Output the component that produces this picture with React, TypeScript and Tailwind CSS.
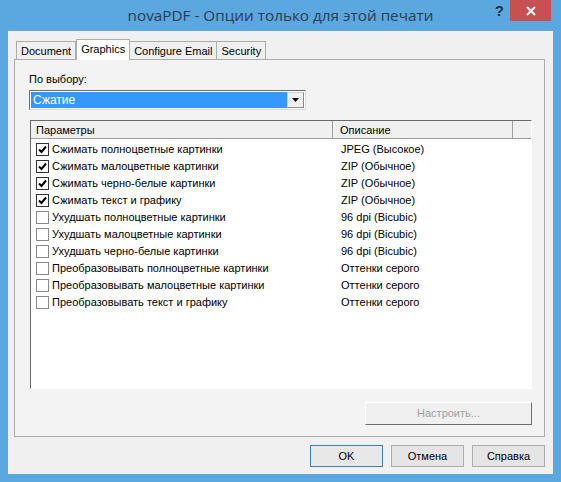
const rows = [
  { label: "Сжимать полноцветные картинки", desc: "JPEG (Высокое)", on: true },
  { label: "Сжимать малоцветные картинки", desc: "ZIP (Обычное)", on: true },
  { label: "Сжимать черно-белые картинки", desc: "ZIP (Обычное)", on: true },
  { label: "Сжимать текст и графику", desc: "ZIP (Обычное)", on: true },
  { label: "Ухудшать полноцветные картинки", desc: "96 dpi (Bicubic)", on: false },
  { label: "Ухудшать малоцветные картинки", desc: "96 dpi (Bicubic)", on: false },
  { label: "Ухудшать черно-белые картинки", desc: "96 dpi (Bicubic)", on: false },
  { label: "Преобразовывать полноцветные картинки", desc: "Оттенки серого", on: false },
  { label: "Преобразовывать малоцветные картинки", desc: "Оттенки серого", on: false },
  { label: "Преобразовывать текст и графику", desc: "Оттенки серого", on: false },
];

const tabs = ["Document", "Graphics", "Configure Email", "Security"];

export default function App() {
  return (
    <div
      className="flex h-[482px] w-[561px] flex-col bg-[#5ba7df] text-[11px] text-black"
      style={{ fontFamily: '"Liberation Sans", Arial, sans-serif' }}
    >
      {/* title bar */}
      <div className="grid h-[31px] grid-cols-[1fr_auto_1fr] items-start">
        <div />
        <div
          className="pt-[4px] text-[15.3px] leading-[22px] text-[#2a3d4f]"
          style={{ fontFamily: '"Open Sans", "Noto Sans", sans-serif' }}
        >
          novaPDF - Опции только для этой печати
        </div>
        <div className="flex items-start justify-end pr-[10px]">
          <span className="mr-[6px] mt-[3px] text-[15px] font-bold leading-[16px] text-[#1e3346]">?</span>
          <button
            type="button"
            className="grid h-[21px] w-[41px] place-items-center bg-[#c75050] text-white"
          >
            <svg width="10" height="10" viewBox="0 0 10 10">
              <path d="M1 1L9 9M9 1L1 9" stroke="white" strokeWidth="2" />
            </svg>
          </button>
        </div>
      </div>

      {/* client */}
      <div className="mx-[8px] mb-[8px] flex flex-1 flex-col bg-[#f0f0f0] pl-[6px] pr-[8px] pt-[9px]">
        <div className="flex h-[19px] items-end pl-[2px]">
          {tabs.map((t) => {
            const sel = t === "Graphics";
            return (
              <div
                key={t}
                className={
                  sel
                    ? "relative z-10 -mb-px flex h-[21px] items-start border border-b-0 border-[#adadad] bg-white px-[4px] pt-[2px] leading-[15px]"
                    : "-ml-px flex h-[18px] items-start border border-b-0 border-[#adadad] bg-[#f0f0f0] px-[4px] pt-[2px] leading-[15px] first:ml-0"
                }
              >
                {t}
              </div>
            );
          })}
        </div>

        {/* tab page */}
        <div className="flex h-[378px] flex-col border border-[#adadad] bg-[#f3f3f3] pl-[14px] pr-[12px] pt-[12px]">
          <div className="leading-[15px]">По выбору:</div>
          <div className="mt-[3px] flex h-[20px] w-[277px] border border-t-[#6d6d6d] border-l-[#6d6d6d] border-r-[#dcdcdc] border-b-[#dcdcdc] bg-white p-px">
            <div className="flex flex-1 items-center bg-[#3399ff] px-[2px] text-[12px] text-white">Сжатие</div>
            <div className="grid w-[17px] place-items-center border border-[#d0d0d0] border-b-[#8c8c8c] border-r-[#8c8c8c] bg-[#f0f0f0]">
              <svg width="7" height="4" viewBox="0 0 7 4">
                <path d="M0 0H7L3.5 4Z" fill="black" />
              </svg>
            </div>
          </div>

          {/* list */}
          <div className="ml-px mt-[10px] flex h-[269px] flex-col border border-t-[#696969] border-l-[#696969] border-r-[#ffffff] border-b-[#ffffff] bg-white">
            <div className="flex h-[18px] border-b border-[#a0a0a0] bg-[#f0f0f0] leading-[16px]">
              <div className="w-[302px] border-r border-[#a0a0a0] pl-[5px] pt-px">Параметры</div>
              <div className="w-[180px] border-r border-[#a0a0a0] pl-[7px] pt-px">Описание</div>
              <div className="flex-1" />
            </div>
            <div className="pt-[2px]">
              {rows.map((r) => (
                <div key={r.label} className="flex h-[17px] items-center">
                  <div className="flex w-[302px] items-center pl-[5px]">
                    <span
                      className={
                        "grid h-[13px] w-[13px] place-items-center border bg-white " +
                        (r.on ? "border-[#333333]" : "border-[#8a8a8a]")
                      }
                    >
                      {r.on && (
                        <svg width="9" height="9" viewBox="0 0 9 9">
                          <path d="M1 4.5L3.5 7L8 1.5" stroke="black" strokeWidth="2" fill="none" />
                        </svg>
                      )}
                    </span>
                    <span className="ml-[3px] whitespace-nowrap">{r.label}</span>
                  </div>
                  <div className="pl-[8px] whitespace-nowrap">{r.desc}</div>
                </div>
              ))}
            </div>
          </div>

          <div className="mt-[13px] flex justify-end">
            <button
              type="button"
              disabled
              className="h-[23px] w-[167px] border border-t-white border-l-white border-r-[#6d6d6d] border-b-[#6d6d6d] bg-[#f0f0f0] text-[#a0a0a0]"
            >
              Настроить...
            </button>
          </div>
        </div>

        {/* dialog buttons */}
        <div className="mt-[8px] flex justify-end gap-[8px]">
          <button type="button" className="h-[22px] w-[73px] border border-[#3c7fb1] bg-[#e8e8e8]">
            OK
          </button>
          <button type="button" className="h-[22px] w-[73px] border border-[#acacac] bg-[#e5e5e5]">
            Отмена
          </button>
          <button type="button" className="h-[22px] w-[73px] border border-[#acacac] bg-[#e5e5e5]">
            Справка
          </button>
        </div>
      </div>
    </div>
  );
}
